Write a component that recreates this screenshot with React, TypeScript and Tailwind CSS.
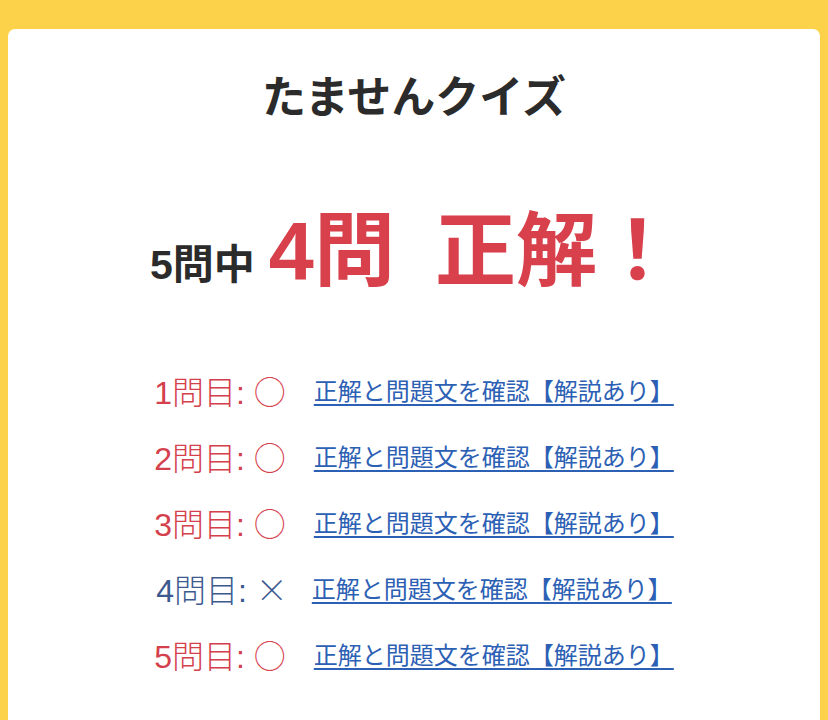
import React from 'react';

const results = [
  { no: 1, ok: true },
  { no: 2, ok: true },
  { no: 3, ok: true },
  { no: 4, ok: false },
  { no: 5, ok: true },
];

export default function App() {
  return (
    <div
      className="min-h-[720px] bg-[#fcd24a] pt-[29px] px-2"
      style={{ fontFamily: '"Liberation Sans", "Noto Sans CJK JP", sans-serif' }}
    >
      <div className="bg-white rounded-t-[7px] min-h-[691px] flex flex-col items-center">
        <h1 className="mt-[40px] text-[44px] leading-[58px] font-bold text-[#2b2b2b]">
          たませんクイズ
        </h1>

        <div className="mt-[84px] flex items-baseline">
          <span className="text-[41px] font-bold text-[#2b2b2b]">5問中</span>
          <span className="ml-[14px] text-[81px] font-bold text-[#d8404c] leading-[1]">4問</span>
          <span className="ml-[40px] text-[81px] font-bold text-[#d8404c] leading-[1]">正解！</span>
        </div>

        <ul className="mt-[73px] flex flex-col gap-[22px]">
          {results.map((r) => (
            <li key={r.no} className="flex items-center justify-center h-[44px]">
              <span
                className={
                  r.ok
                    ? 'text-[32px] text-[#d4404c] font-light'
                    : 'text-[32px] text-[#3d5a8f] font-light'
                }
              >
                {r.no}問目:{' '}
                <span className="font-['Noto_Sans_CJK_JP'] font-light">{r.ok ? '○' : '×'}</span>
              </span>
              <a
                href="#"
                className={
                  r.ok
                    ? 'ml-[28px] text-[24px] text-[#2c60b4] underline underline-offset-[4px]'
                    : 'ml-[24px] text-[24px] text-[#2c60b4] underline underline-offset-[4px]'
                }
              >
                正解と問題文を確認【解説あり】
              </a>
            </li>
          ))}
        </ul>
      </div>
    </div>
  );
}
